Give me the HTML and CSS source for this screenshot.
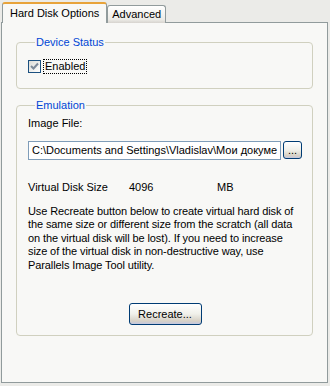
FILE: index.html
```html
<!doctype html>
<html lang="en">
<head>
    <meta charset="utf-8">
    <title>Hard Disk Options</title>
    <link rel="stylesheet" href="styles.css">
</head>
<body>
    <div class="dialog">
        <ul class="tabs">
            <li class="current">Hard Disk Options</li>
            <li>Advanced</li>
        </ul>
        <div class="page">
            <fieldset class="group status">
                <legend>Device Status</legend>
                <label class="check">
                    <span class="box">
                        <svg width="11" height="11" viewBox="0 0 11 11"><path d="M2 5 L4.5 7.5 L9 2.5" fill="none" stroke="#7d8a99" stroke-width="2"/></svg>
                    </span>
                    <span class="focus">Enabled</span>
                </label>
            </fieldset>
            <fieldset class="group emulation">
                <legend>Emulation</legend>
                <p class="caption">Image File:</p>
                <div class="file-row">
                    <div class="input">C:\Documents and Settings\Vladislav\Мои докуме</div>
                    <button class="btn small">...</button>
                </div>
                <div class="size-row">
                    <span class="size-label">Virtual Disk Size</span>
                    <span class="size-value">4096</span>
                    <span>MB</span>
                </div>
                <p class="note">Use Recreate button below to create virtual hard disk of the same size or different size from the scratch (all data on the virtual disk will be lost). If you need to increase size of the virtual disk in non-destructive way, use Parallels Image Tool utility.</p>
                <div class="actions">
                    <button class="btn">Recreate...</button>
                </div>
            </fieldset>
        </div>
    </div>
</body>
</html>
```

FILE: styles.css
```css
* {
    padding: 0;
    margin: 0;
    list-style: none;
    box-sizing: border-box;
}

body {
    width: 330px;
    height: 386px;
    background: #ebebe8;
    font-family: "Liberation Sans", Arial, sans-serif;
    font-size: 11px;
    color: #000;
}

.dialog {
    padding: 2px 2px 0 1px;
}

.tabs {
    display: flex;
    align-items: flex-end;
    padding-left: 1px;
    height: 21px;
    position: relative;
    z-index: 1;
}

.tabs li {
    height: 18px;
    padding: 0 4px;
    line-height: 17px;
    font-size: 11px;
    border: 1px solid #919b9c;
    border-bottom: 0;
    border-radius: 3px 3px 0 0;
    background: linear-gradient(#ffffff, #ecebe6 80%, #d6d3ce);
}

.tabs li.current {
    height: 21px;
    padding: 0 7px;
    line-height: 19px;
    border-top: 2px solid #e8a33a;
    background: #f8f8f6;
}

.page {
    margin-top: -1px;
    height: 361px;
    border: 1px solid #919b9c;
    background: #f8f8f6;
    padding: 13px 14px 0 14px;
}

.group {
    border: 1px solid #d0d0bf;
    border-radius: 4px;
    padding: 0 10px 0 11px;
    width: 297px;
}

.group legend {
    color: #0046d5;
    padding: 0 1px;
    margin-left: 7px;
    line-height: 13px;
}

.status {
    height: 53px;
    padding-top: 11px;
}

.check {
    display: flex;
    align-items: center;
    gap: 3px;
}

.box {
    display: flex;
    align-items: center;
    justify-content: center;
    width: 13px;
    height: 13px;
    border: 1px solid #1c5180;
    background: linear-gradient(135deg, #dcdcd6, #ffffff);
}

.focus {
    outline: 1px dotted #000;
    line-height: 13px;
    padding: 0 1px;
}

.emulation {
    margin-top: 10px;
    height: 237px;
    padding-top: 5px;
}

.caption {
    line-height: 13px;
}

.file-row {
    display: flex;
    gap: 2px;
    margin-top: 11px;
}

.input {
    width: 253px;
    height: 19px;
    border: 1px solid #7f9db9;
    background: #fff;
    padding: 0 3px;
    line-height: 17px;
    overflow: hidden;
    white-space: nowrap;
}

.btn {
    font-family: inherit;
    font-size: 11px;
    color: #000;
    border: 1px solid #003c74;
    border-radius: 3px;
    background: linear-gradient(#ffffff, #f0f0ea 50%, #d6d0c5 85%, #c4c8e0);
    width: 73px;
    height: 22px;
}

.btn.small {
    width: 19px;
    height: 18px;
    line-height: 10px;
}

.size-row {
    display: flex;
    margin-top: 21px;
    line-height: 13px;
}

.size-label {
    width: 101px;
}

.size-value {
    width: 88px;
}

.note {
    margin-top: 11px;
    line-height: 13.4px;
    width: 274px;
    letter-spacing: -0.1px;
}

.actions {
    display: flex;
    justify-content: center;
    margin-top: 31px;
}
```
